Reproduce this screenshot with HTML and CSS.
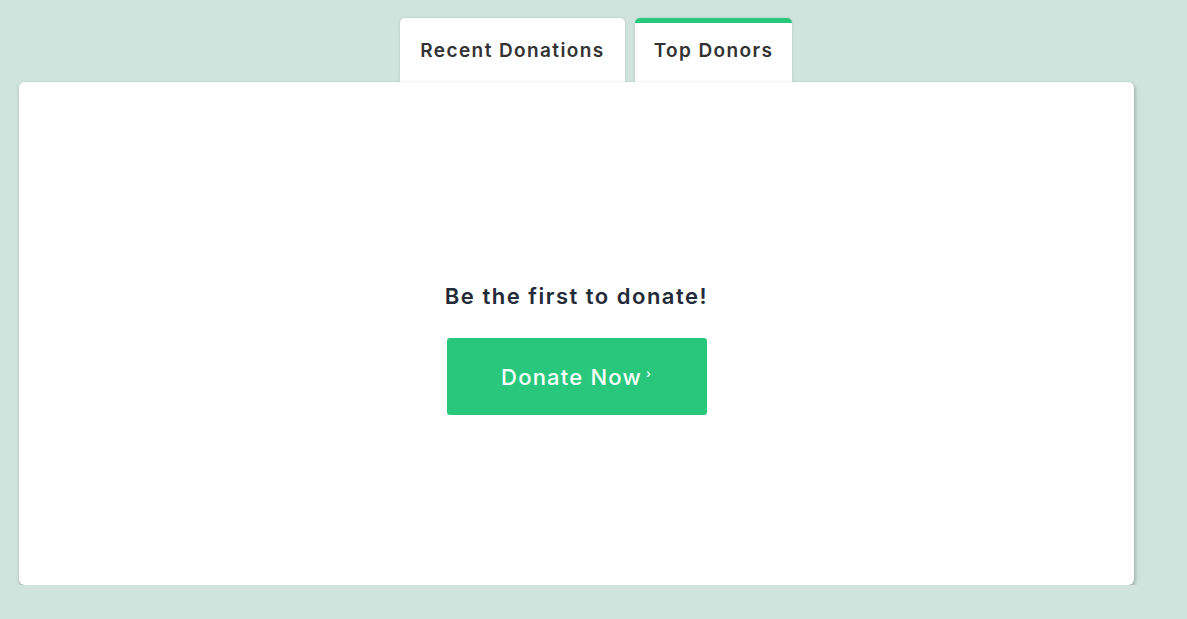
FILE: index.html
```html
<!DOCTYPE html>
<html lang="en">
<head>
    <meta charset="UTF-8">
    <meta name="viewport" content="width=device-width, initial-scale=1.0">
    <title>Donations</title>
    <link rel="stylesheet" href="styles.css">
</head>
<body>
    <div class="page">
        <div class="tabs">
            <button class="tab tab-recent">Recent Donations</button>
            <button class="tab tab-top active">Top Donors</button>
        </div>
        <div class="panel">
            <h2 class="empty-title">Be the first to donate!</h2>
            <a class="donate-btn" href="#">Donate Now<span class="chev">›</span></a>
        </div>
    </div>
</body>
</html>
```
FILE: styles.css
```css
body {
    margin: 0;
    background-color: #d0e3dd;
    font-family: Inter, "Open Sans", sans-serif;
}
.page {
    padding: 18px 14px 0 19px;
}
.tabs {
    display: flex;
    justify-content: center;
    gap: 10px;
}
.tab {
    height: 64px;
    border: none;
    border-radius: 5px 5px 0 0;
    background-color: white;
    color: #333;
    font-family: inherit;
    font-size: 19px;
    font-weight: 600;
    letter-spacing: 1.4px;
    padding: 0;
    box-shadow: 0 0 3px rgba(0, 0, 0, 0.12);
    cursor: pointer;
}
.tab-recent {
    width: 225px;
}
.tab-top {
    width: 157px;
}
.tab.active {
    border-top: 5px solid #29c77c;
    padding-bottom: 5px;
}
.panel {
    position: relative;
    margin-right: 39px;
    height: 503px;
    box-sizing: border-box;
    padding-top: 201px;
    background-color: white;
    border-radius: 6px;
    box-shadow: 1px 2px 4px rgba(0, 0, 0, 0.28);
    display: flex;
    flex-direction: column;
    align-items: center;
}
.empty-title {
    margin: 0;
    font-size: 22px;
    line-height: 26px;
    font-weight: 600;
    letter-spacing: 1.5px;
    color: #232a38;
}
.donate-btn {
    margin-top: 29px;
    width: 260px;
    height: 77px;
    display: flex;
    align-items: center;
    justify-content: center;
    background-color: #29c77c;
    border-radius: 3px;
    color: white;
    text-decoration: none;
    font-size: 22px;
    font-weight: 500;
    letter-spacing: 1.2px;
}
.chev {
    font-size: 12px;
    margin-left: 4px;
    margin-bottom: 6px;
}
```
